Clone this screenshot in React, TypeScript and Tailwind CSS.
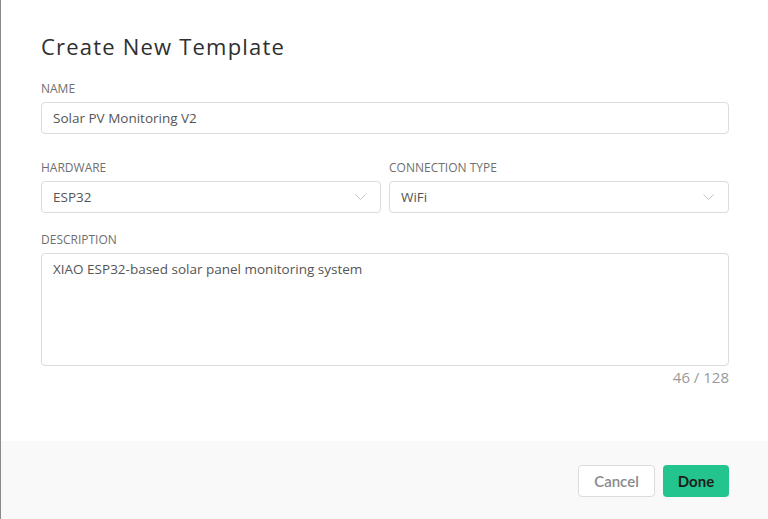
import { useState } from 'react'

const Chevron = () => (
	<svg width="11" height="6" viewBox="0 0 11 6" fill="none" className="shrink-0">
		<polyline points="0.5,0.5 5.5,5.5 10.5,0.5" stroke="#c4c4c4" strokeWidth="1" />
	</svg>
)

const Label = ({ children }: { children: string }) => (
	<div className="text-[12px] leading-[16px] uppercase text-[#6f6f6f]">
		{children}
	</div>
)

const SelectBox = ({ value }: { value: string }) => (
	<div className="mt-[5px] h-[32px] flex items-center justify-between pl-[11px] pr-[14px] border border-[#dcdcdc] rounded-[4px] bg-white">
		<span className="text-[13.5px] text-[#555]">{value}</span>
		<Chevron />
	</div>
)

export default function App() {
	const [name] = useState('Solar PV Monitoring V2')
	const [description] = useState('XIAO ESP32-based solar panel monitoring system')

	return (
		<div className="w-[768px] h-[519px] flex flex-col bg-white border-l border-[#8a8a8a] font-['Open_Sans',sans-serif] overflow-hidden">
			<main className="flex-1 pl-10">
				<div className="w-[688px] pt-[32px]">
					<h1 className="text-[22px] leading-[28px] tracking-[1.2px] text-[#2f2f2f] font-['Open_Sans',sans-serif]">
						Create New Template
					</h1>

					<div className="mt-[21px]">
						<Label>Name</Label>
						<div className="mt-[5px] h-[32px] flex items-center px-[11px] border border-[#dcdcdc] rounded-[4px]">
							<span className="text-[13.5px] text-[#555]">{name}</span>
						</div>
					</div>

					<div className="mt-[26px] grid grid-cols-2 gap-2">
						<div>
							<Label>Hardware</Label>
							<SelectBox value="ESP32" />
						</div>
						<div>
							<Label>Connection Type</Label>
							<SelectBox value="WiFi" />
						</div>
					</div>

					<div className="mt-[19px]">
						<Label>Description</Label>
						<div className="mt-[5px] h-[113px] px-[11px] pt-[5px] border border-[#dcdcdc] rounded-[4px]">
							<p className="text-[13.5px] leading-[20px] text-[#555]">{description}</p>
						</div>
						<div className="mt-[1px] text-right text-[15px] leading-[20px] text-[#9a9a9a]">
							{description.length} / 128
						</div>
					</div>
				</div>
			</main>

			<footer className="h-[78px] bg-[#f9f9f9] pl-10">
				<div className="w-[688px] pt-[24px] flex justify-end gap-2">
					<button className="h-[32px] w-[77px] rounded-[4px] border border-[#dcdcdc] bg-white text-[15px] text-[#8a8a8a] font-semibold font-['Lato',sans-serif]">
						Cancel
					</button>
					<button className="h-[32px] w-[66px] rounded-[4px] bg-[#23c48e] text-[15px] text-[#1c1c1c] font-bold font-['Lato',sans-serif]">
						Done
					</button>
				</div>
			</footer>
		</div>
	)
}
